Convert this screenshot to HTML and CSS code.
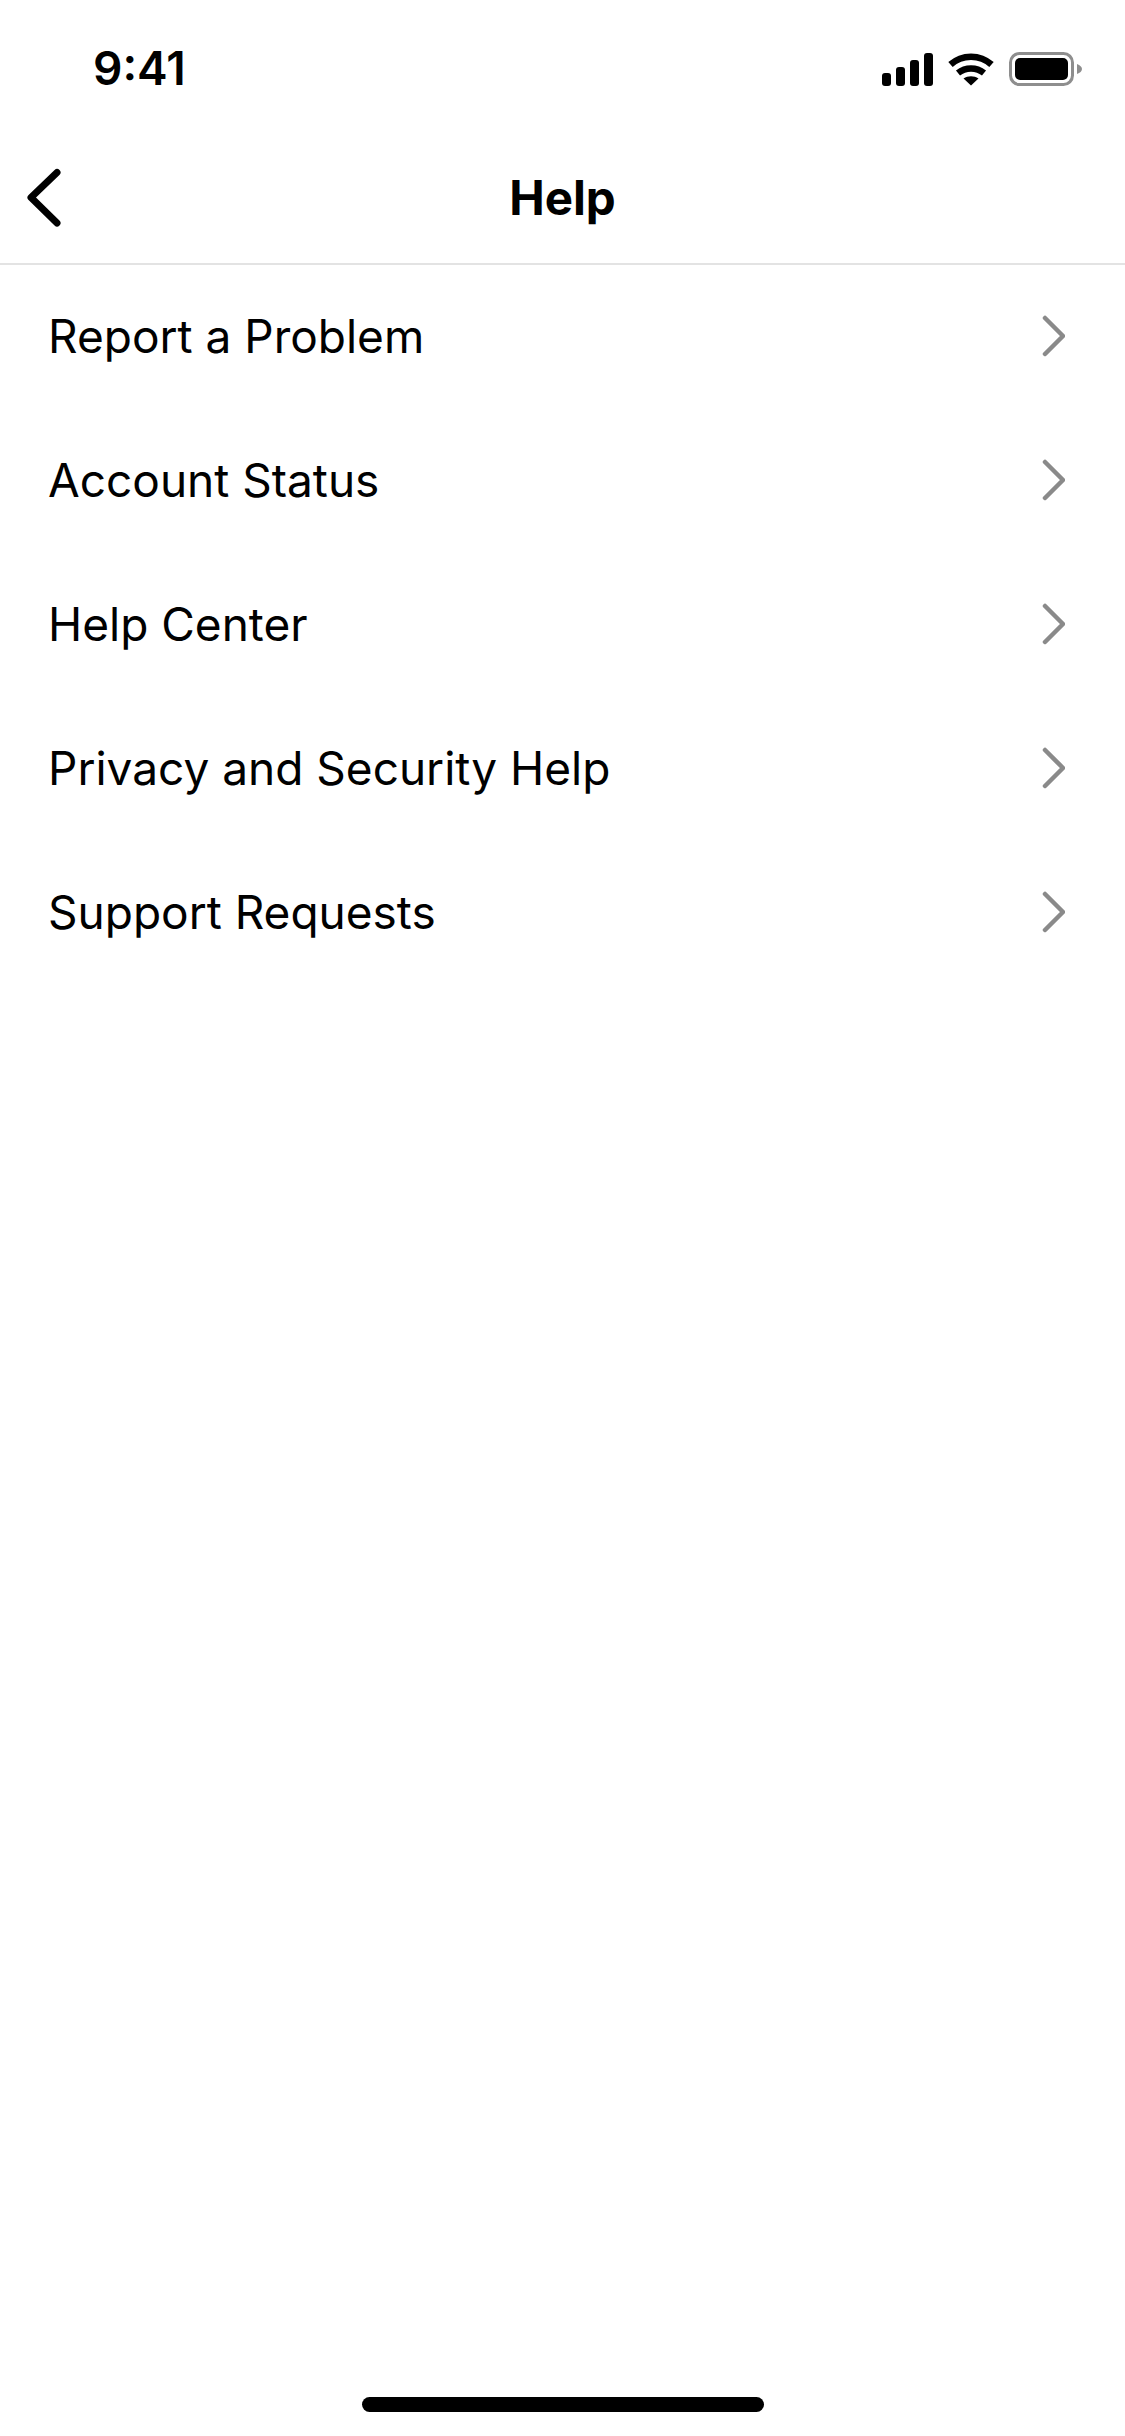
FILE: index.html
```html
<!DOCTYPE html>
<html lang="en">
<head>
    <meta charset="UTF-8">
    <meta name="viewport" content="width=device-width, initial-scale=1.0">
    <title>Help</title>
    <link rel="stylesheet" href="styles.css">
</head>
<body>
    <div class="status-bar">
        <span class="time">9:41</span>
        <div class="status-icons">
            <svg class="signal" width="51" height="33" viewBox="0 0 51 33" fill="#000">
                <rect x="0" y="20" width="9" height="13" rx="3"/>
                <rect x="14" y="14" width="9" height="19" rx="3"/>
                <rect x="28" y="7" width="9" height="26" rx="3"/>
                <rect x="42" y="0" width="9" height="33" rx="3"/>
            </svg>
            <svg class="wifi" width="46" height="34" viewBox="0 0 46 34" fill="none" stroke="#000" stroke-width="6.5">
                <path d="M2.5 12.5C14 2 32 2 43.5 12.5"/>
                <path d="M10 21c7.5-6 18.5-6 26 0"/>
                <path d="M23 33.5l-7.5-7c4.5-3 10.5-3 15 0z" fill="#000" stroke="none"/>
            </svg>
            <svg class="battery" width="73" height="34" viewBox="0 0 73 34">
                <rect x="1.5" y="1.5" width="62" height="31" rx="9" fill="none" stroke="#8e8e8e" stroke-width="3"/>
                <rect x="6" y="6" width="53" height="22" rx="5" fill="#000"/>
                <path d="M68 12c3 1 5 3 5 5s-2 4-5 5z" fill="#8e8e8e"/>
            </svg>
        </div>
    </div>

    <div class="nav-bar">
        <svg class="back-icon" width="38" height="60" viewBox="0 0 38 60" fill="none" stroke="#000" stroke-width="7" stroke-linecap="round" stroke-linejoin="round">
            <path d="M31 5.5L5 30.5 31 56"/>
        </svg>
        <h1 class="nav-title">Help</h1>
    </div>

    <div class="menu-list">
        <div class="menu-row">
            <span>Report a Problem</span>
            <svg class="chevron" width="24" height="42" viewBox="0 0 24 42" fill="none" stroke="#8a8a8a" stroke-width="4.5" stroke-linecap="round" stroke-linejoin="round"><path d="M4 3l18 18-18 18"/></svg>
        </div>
        <div class="menu-row">
            <span>Account Status</span>
            <svg class="chevron" width="24" height="42" viewBox="0 0 24 42" fill="none" stroke="#8a8a8a" stroke-width="4.5" stroke-linecap="round" stroke-linejoin="round"><path d="M4 3l18 18-18 18"/></svg>
        </div>
        <div class="menu-row">
            <span>Help Center</span>
            <svg class="chevron" width="24" height="42" viewBox="0 0 24 42" fill="none" stroke="#8a8a8a" stroke-width="4.5" stroke-linecap="round" stroke-linejoin="round"><path d="M4 3l18 18-18 18"/></svg>
        </div>
        <div class="menu-row">
            <span>Privacy and Security Help</span>
            <svg class="chevron" width="24" height="42" viewBox="0 0 24 42" fill="none" stroke="#8a8a8a" stroke-width="4.5" stroke-linecap="round" stroke-linejoin="round"><path d="M4 3l18 18-18 18"/></svg>
        </div>
        <div class="menu-row">
            <span>Support Requests</span>
            <svg class="chevron" width="24" height="42" viewBox="0 0 24 42" fill="none" stroke="#8a8a8a" stroke-width="4.5" stroke-linecap="round" stroke-linejoin="round"><path d="M4 3l18 18-18 18"/></svg>
        </div>
    </div>

    <div class="home-indicator"></div>
</body>
</html>
```

FILE: styles.css
```css
html, body {
    margin: 0;
    padding: 0;
    height: 100%;
    width: 100%;
}

body {
    font-family: Inter, "Liberation Sans", sans-serif;
    background-color: #ffffff;
    color: #000000;
    display: flex;
    flex-direction: column;
    min-height: 2436px;
}

.status-bar {
    height: 132px;
    display: flex;
    justify-content: space-between;
    align-items: center;
    padding: 4px 43px 0 93px;
    box-sizing: border-box;
}

.time {
    font-size: 46px;
    font-weight: 600;
}

.status-icons {
    display: flex;
    align-items: center;
    gap: 15px;
    margin-top: 2px;
}

.nav-bar {
    height: 133px;
    position: relative;
    display: flex;
    justify-content: center;
    align-items: center;
    border-bottom: 2px solid #e3e3e3;
    box-sizing: border-box;
}

.nav-title {
    margin: 0;
    font-size: 47.5px;
    font-weight: 700;
}

.back-icon {
    position: absolute;
    left: 26px;
    top: 35px;
}

.menu-list {
    flex: 1;
}

.menu-row {
    height: 144px;
    display: flex;
    justify-content: space-between;
    align-items: center;
    padding: 0 60px 2px 48px;
    box-sizing: border-box;
    font-size: 46px;
}

.home-indicator {
    width: 402px;
    height: 15px;
    margin: 0 auto 24px;
    border-radius: 8px;
    background-color: #000000;
}
```
